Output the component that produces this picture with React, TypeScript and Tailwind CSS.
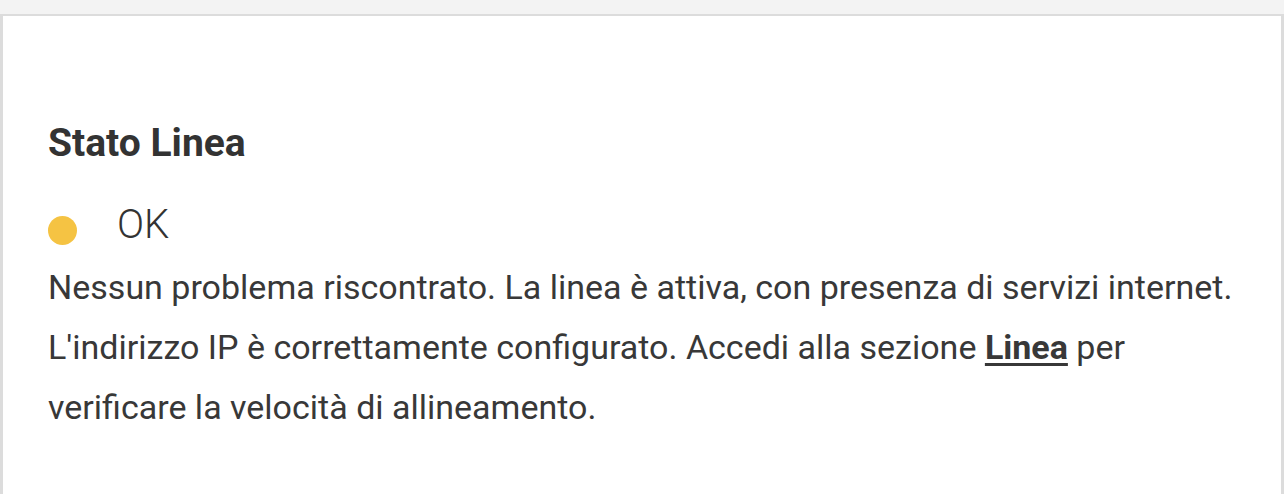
export default function App() {
  return (
    <div className="h-[494px] overflow-hidden bg-[#f3f3f3] pt-[14px] font-['Roboto',sans-serif] text-[#333333]">
      <div className="h-full border-x-[3px] border-t-2 border-[#dcdcdc] bg-white px-[45px] pt-[102px]">
        <h2 className="text-[39px] font-bold leading-[50px]">Stato Linea</h2>
        <div className="mt-[33px] flex items-center gap-[40px]">
          <span className="mt-[10px] h-[29px] w-[29px] rounded-full bg-[#f5c343]" />
          <span className="text-[40px] font-light leading-[48px]">OK</span>
        </div>
        <p className="mt-[8px] text-[34px] leading-[60px] text-[#383838]">
          Nessun problema riscontrato. La linea è attiva, con presenza di servizi internet.
          L'indirizzo IP è correttamente configurato. Accedi alla sezione{" "}
          <a href="#" className="font-bold underline underline-offset-4">Linea</a> per verificare la
          velocità di allineamento.
        </p>
      </div>
    </div>
  );
}
